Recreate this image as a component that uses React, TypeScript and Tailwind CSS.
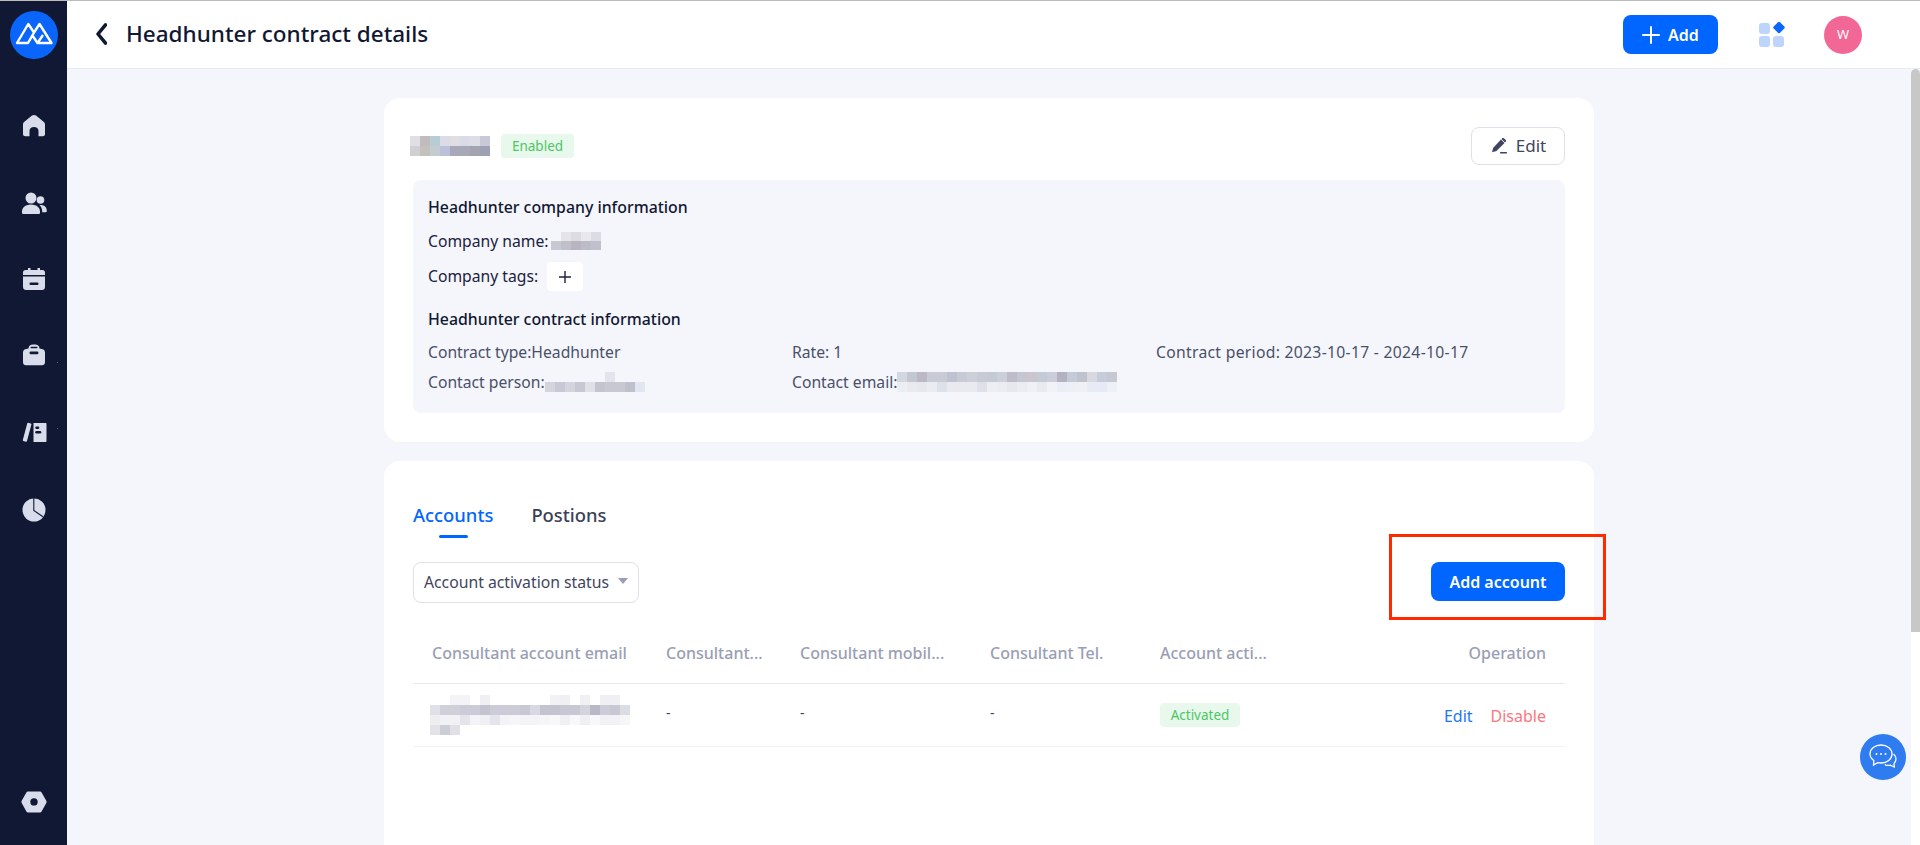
import React from "react";

const Mosaic = ({ rows, cell = 10, rowH = 10 }: { rows: string[][]; cell?: number; rowH?: number }) => {
  const cols = Math.max(...rows.map((r) => r.length));
  return (
    <svg width={cols * cell} height={rows.length * rowH} shapeRendering="crispEdges" className="block shrink-0">
      {rows.map((r, y) =>
        r.map((c, x) => <rect key={`${x}-${y}`} x={x * cell} y={y * rowH} width={cell} height={rowH} fill={c} />)
      )}
    </svg>
  );
};

const ICON = "#d9dcea";
const BG = "#111833";

const Home = () => (
  <svg width="24" height="24" viewBox="0 0 24 24">
    <path fill={ICON} d="M10 1.600c1.200-.9 2.800-.9 4 0l7.600 6.200c.9.700 1.400 1.700 1.400 2.800v9.400c0 1.300-1 2.300-2.300 2.300h-4.200v-5.300c0-2.500-1.800-4-4.500-4s-4.500 1.500-4.500 4v5.300H3.300C2 22.300 1 21.300 1 20v-9.400c0-1.100.5-2.100 1.400-2.800z" />
  </svg>
);
const People = () => (
  <svg width="26" height="24" viewBox="0 0 26 24">
    <circle cx="10" cy="7" r="5.500" fill={ICON} />
    <path fill={ICON} d="M1 22c-.6-5 3-8.500 9-8.500s9.500 3.500 9 8.500c-.1.800-.7 1-1.500 1h-15c-.8 0-1.400-.2-1.500-1z" />
    <circle cx="19.500" cy="9" r="3.800" fill={ICON} />
    <path fill={ICON} d="M18.500 14c4-.5 7.500 1.500 7.300 6 0 .8-.5 1.200-1.300 1.200h-3.300c.2-2.800-.8-5.200-2.700-7.200z" />
  </svg>
);
const Calendar = () => (
  <svg width="24" height="24" viewBox="0 0 24 24">
    <path fill={ICON} d="M6 1h2.500v2h7V1H18v2h2.500C22 3 23 4 23 5.500V8H1V5.500C1 4 2 3 3.500 3H6z" />
    <path fill={ICON} d="M1 9.500h22V20c0 1.700-1.300 3-3 3H4c-1.700 0-3-1.300-3-3z" />
    <rect x="7.500" y="15.500" width="9" height="2.500" rx="1" fill={BG} />
  </svg>
);
const Bag = () => (
  <svg width="24" height="24" viewBox="0 0 24 24">
    <path fill={ICON} d="M6.500 5.500C6.500 2.800 8.500 1.500 11 1.500h2c2.500 0 4.500 1.300 4.500 4 3.300.3 5.500 1.400 5.500 3.800v10c0 1.700-1.300 3-3 3H4c-1.700 0-3-1.300-3-3v-10c0-2.400 2.200-3.500 5.500-3.800z" />
    <rect x="8.500" y="3.800" width="7" height="1.500" rx=".7" fill={BG} />
    <rect x="7.500" y="8.500" width="9" height="2.800" rx="1.400" fill={BG} />
  </svg>
);
const Book = () => (
  <svg width="26" height="24" viewBox="0 0 26 24">
    <path fill={ICON} d="M6.200 3.500c.2-.6.600-.8 1.200-.7l2.300.6c.6.200.8.600.7 1.200L6 21c-.2.600-.6.800-1.200.7l-2.300-.6c-.6-.2-.8-.6-.7-1.200z" />
    <path fill={ICON} d="M12.500 3h12.300c.400 0 .700.300.700.700v17.600c0 .400-.3.700-.7.700H12.500z" />
    <rect x="14.300" y="6.500" width="4" height="2.500" rx="1.200" fill={BG} />
    <rect x="14.300" y="11" width="6" height="2.500" rx="1.200" fill={BG} />
  </svg>
);
const Pie = () => (
  <svg width="24" height="24" viewBox="0 0 24 24">
    <circle cx="12" cy="12" r="11.500" fill={ICON} />
    <path d="M11.800 0V12.500L21 18.800" fill="none" stroke={BG} strokeWidth="1.100" />
  </svg>
);
const Gear = () => (
  <svg width="26" height="24" viewBox="0 0 26 24">
    <path fill={ICON} fillRule="evenodd" d="M7 1.500h12c.7 0 1.200.3 1.600 1l4.700 8.200c.4.800.4 1.500 0 2.300l-4.700 8.500c-.4.700-.9 1-1.600 1H7c-.7 0-1.200-.3-1.600-1L.7 13c-.4-.8-.4-1.500 0-2.300l4.700-8.200c.4-.7.900-1 1.600-1zM13 8.200a3.700 3.700 0 1 0 0 7.400 3.700 3.700 0 0 0 0-7.400z" />
  </svg>
);

const Logo = () => (
  <svg width="48" height="48" viewBox="0 0 48 48" className="block">
    <circle cx="24" cy="24" r="24" fill="#0a66fb" />
    <path
      fill="none"
      stroke="#fff"
      strokeWidth="2.400"
      strokeLinejoin="round"
      d="M7 32 18.300 13 24 21.500 29.500 13 41.500 32H27.500L22.500 24.500 18 32zM24 21.500 18 32M27.500 32 33 24"
    />
  </svg>
);

const navItems = [
  { I: Home, h: "h-[77px]", dot: "" },
  { I: People, h: "h-[76px]", dot: "" },
  { I: Calendar, h: "h-[76px]", dot: "" },
  { I: Bag, h: "h-[77px]", dot: "top-[19px]" },
  { I: Book, h: "h-[78px]", dot: "top-[8px]" },
  { I: Pie, h: "h-[24px]", dot: "" },
];

const Sidebar = () => (
  <aside className="w-[67px] shrink-0 bg-[#111833] flex flex-col items-center">
    <div className="mt-[10px] h-[48px] w-[48px]">
      <Logo />
    </div>
    <nav className="mt-[55px] flex flex-col items-center w-full">
      {navItems.map(({ I, h, dot }, i) => (
        <div key={i} className={`${h} relative flex items-start justify-center w-full`}>
          <I />
          {dot && <span className={`absolute left-[57px] ${dot} h-px w-px bg-[#1f6fc4]`} />}
        </div>
      ))}
    </nav>
    <div className="mt-auto mb-[31px]">
      <Gear />
    </div>
  </aside>
);

const Header = () => (
  <header className="h-[68px] shrink-0 bg-white border-b border-[#e8eaf2] flex items-center pl-[28px] pr-[58px]">
    <svg width="12" height="24" viewBox="0 0 12 24" className="mr-[19px] -mt-px">
      <path d="M10.500 2.800 3 12 10.500 21.200" fill="none" stroke="#111833" strokeWidth="3.500" strokeLinecap="round" strokeLinejoin="round" />
    </svg>
    <h1 className="text-[22.500px] font-medium text-[#111833] leading-none">Headhunter contract details</h1>
    <button className="ml-auto h-[39px] w-[95px] rounded-lg bg-[#0066ff] text-white flex items-center justify-center gap-[8px] text-[16px] font-semibold">
      <svg width="18" height="18" viewBox="0 0 18 18">
        <path d="M9 1v16M1 9h16" stroke="#fff" strokeWidth="2" strokeLinecap="round" />
      </svg>
      Add
    </button>
    <svg width="27" height="27" viewBox="0 0 27 27" className="ml-[41px]">
      <rect x="0" y="2" width="11" height="11" rx="3" fill="#bdd4fd" />
      <rect x="0" y="15" width="11" height="11" rx="3" fill="#bdd4fd" />
      <rect x="14" y="15" width="11" height="11" rx="3" fill="#bdd4fd" />
      <rect x="15.500" y="2" width="9" height="9" rx="1.500" transform="rotate(45 20 6.500)" fill="#0a66fb" />
    </svg>
    <div className="ml-[38px] h-[38px] w-[38px] rounded-full bg-[#f36796] text-white text-[13px] flex items-center justify-center">W</div>
  </header>
);

const Watermark = () => (
  <div className="absolute inset-0 overflow-hidden pointer-events-none">
    <div className="ml-[39px] mt-[8px] grid grid-cols-[repeat(8,245px)] auto-rows-[120px] w-[1960px]">
      {Array.from({ length: 56 }).map((_, i) => (
        <div key={i} className="flex flex-col items-center justify-center -rotate-[31deg] text-[20px] leading-[24px] text-[#5f6b8a]/[0.02] whitespace-nowrap">
          <span>wangyue1@mokah 2023-11-1</span>
          <span className="text-[18px]">wangyue1</span>
        </div>
      ))}
    </div>
  </div>
);

const nameRows = [
  ["#e0e0e4", "#c0bcbc", "#b8ccd6", "#dcdce6", "#e0dee2", "#d8dce6", "#dcdee6", "#c8c8d8"],
  ["#d0d0d4", "#c4c0bc", "#c4ccd0", "#bcc0d8", "#a8a8b8", "#a8a8b8", "#a4a4b0", "#a0a0b4"],
];
const companyRows = [
  ["#f4f6fb", "#e4e4ea", "#dcdce4", "#e8e8ee", "#dcdce4"],
  ["#c8c8d2", "#c0c0ca", "#b8b4c0", "#bcbcc8", "#c0c0cc"],
];
const personRows = [
  ["#f4f6fb", "#f4f6fb", "#f4f6fb", "#f4f6fb", "#f4f6fb", "#f4f6fb", "#e4e4ec", "#f4f6fb", "#f4f6fb", "#f4f6fb"],
  ["#d4d4dc", "#c8c8d4", "#d4d4dc", "#c8c8d4", "#e0e0e8", "#c4c4d0", "#c8c8d2", "#c8c8d2", "#c0c0cc", "#e2e6f2"],
];
const emailRows = [
  ["#d4d6e0", "#c4c6d2", "#bcb8c4", "#c8cad6", "#c8cad6", "#bfc2d0", "#c8cad6", "#ccced8", "#c8cad6", "#c6cad4", "#ccced8", "#bebcc8", "#c6c6d2", "#cac6cc", "#c6cad6", "#cccdda", "#b2b2c2", "#c6cad6", "#c0c2ce", "#d8d8de", "#c8ccda", "#c6c8d2"],
  ["#eceef4", "#e8eaf0", "#e6e8ee", "#eaecf2", "#dde2ea", "#e8eaf0", "#e8eaf0", "#e8eaf0", "#dde2ea", "#eceef4", "#eaecf2", "#e6e8ee", "#eaecf2", "#eef0f6", "#e8eaf0", "#f0f2f8", "#ebeef6", "#eeeff6", "#eef0f6", "#e8eaf4", "#e6eaf6", "#eef0f8"],
];
const tableEmailRows = [
  ["#ffffff", "#ffffff", "#f4f4f8", "#f4f4f8", "#ffffff", "#f0f0f4", "#ffffff", "#ffffff", "#ffffff", "#ffffff", "#ffffff", "#ffffff", "#f2f2f6", "#f0f0f4", "#ffffff", "#f0f0f4", "#ffffff", "#f0f0f4", "#f0f0f4", "#ffffff"],
  ["#e0e0e8", "#d0d0da", "#d0d0da", "#ccccd8", "#ccccd8", "#c4c4d0", "#ccccd8", "#ccccd8", "#ccccd8", "#c8c8d4", "#d8d8e2", "#c4c4d0", "#c4c4d0", "#c8c8d4", "#c8c8d4", "#d4d4de", "#b8b8c6", "#ccccd8", "#c8c8d4", "#dcdce4"],
  ["#eeeef2", "#f2f2f6", "#f2f2f6", "#e4e4ea", "#f4f4f8", "#f0f0f4", "#e4e4ec", "#f4f4f8", "#f6f6f8", "#f4f4f8", "#f4f4f8", "#f6f6f8", "#f8f8fa", "#f0f0f4", "#f8f8fa", "#f0f0f4", "#f8f8fa", "#f2f2f6", "#f2f2f6", "#f6f6f8"],
  ["#e2e2e8", "#cccdd6", "#e0e0e6"],
];

const Card1 = () => (
  <section className="bg-white rounded-2xl px-[29px] pt-[29px] pb-[29px] mb-[19px]">
    <div className="flex items-center h-[38px] mb-[15px]">
      <div className="-ml-[3px] mr-[11px]">
        <Mosaic rows={nameRows} />
      </div>
      <span className="h-[24px] w-[73px] rounded bg-[#e8f8ec] text-[#4cc764] text-[13.500px] flex items-center justify-center">Enabled</span>
      <button className="ml-auto h-[38px] w-[94px] rounded-lg border border-[#dfe0ea] text-[#3f4460] text-[17px] flex items-center justify-center gap-[8px] bg-white">
        <svg width="18" height="18" viewBox="0 0 18 18">
          <path fill="#3f4460" d="M11 2.500 14.500 6l-7.800 7.800c-.3.300-.6.500-1 .5l-3.700 1 1-3.700c.1-.4.300-.7.500-1zM12.200 1.300c.5-.5 1.200-.5 1.700 0l1.800 1.800c.5.500.5 1.200 0 1.700l-.7.700L11.500 2z" />
          <rect x="10" y="15" width="7" height="1.600" rx=".5" fill="#3f4460" />
        </svg>
        Edit
      </button>
    </div>
    <div className="bg-[#f4f6fb] rounded-lg pl-[15px] pr-[15px] pt-[15px] pb-[19px] text-[15.700px] text-[#1c2140]">
      <h3 className="h-[24px] leading-[24px] text-[15.850px] font-medium text-[#111833]">Headhunter company information</h3>
      <div className="mt-[10px] h-[24px] leading-[24px] flex items-center">
        <span>Company name:</span>
        <div className="ml-[2px]">
          <Mosaic rows={companyRows} cell={10} rowH={9} />
        </div>
      </div>
      <div className="mt-[9px] h-[29px] flex items-center">
        <span>Company tags:</span>
        <span className="ml-[9px] h-[29px] w-[36px] rounded bg-white flex items-center justify-center">
          <svg width="14" height="14" viewBox="0 0 14 14">
            <path d="M7 1v12M1 7h12" stroke="#1c2140" strokeWidth="1.400" />
          </svg>
        </span>
      </div>
      <h3 className="mt-[16px] h-[24px] leading-[24px] text-[15.850px] font-medium text-[#111833]">Headhunter contract information</h3>
      <div className="grid grid-cols-[364px_364px_1fr] text-[#4b5069] leading-[24px]">
        <div className="mt-[9px]">Contract type:Headhunter</div>
        <div className="mt-[9px]">Rate: 1</div>
        <div className="mt-[9px] tracking-[0.3px]">Contract period: 2023-10-17 - 2024-10-17</div>
        <div className="mt-[6px] flex items-center">
          <span>Contact person:</span>
          <Mosaic rows={personRows} />
        </div>
        <div className="mt-[6px] flex items-center">
          <span>Contact email:</span>
          <Mosaic rows={emailRows} />
        </div>
      </div>
    </div>
  </section>
);

const cols = "grid grid-cols-[234px_134px_190px_170px_1fr]";

const Card2 = () => (
  <section className="relative bg-white rounded-t-2xl px-[29px] pt-[42px] h-[500px]">
    <div className="flex gap-[38px] text-[18.400px] font-medium">
      <div className="flex flex-col items-center">
        <span className="leading-[24px] text-[#0066ff]">Accounts</span>
        <span className="mt-[8px] h-[3px] w-[29px] rounded bg-[#0066ff]" />
      </div>
      <span className="leading-[24px] text-[#3b3f57]">Postions</span>
    </div>
    <div className="mt-[24px] flex justify-between items-start">
      <div className="h-[41px] w-[226px] rounded-lg border border-[#dfe0ea] flex items-center pl-[10px] text-[15.750px] text-[#3f4460] whitespace-nowrap">
        Account activation status
        <svg width="10" height="6" viewBox="0 0 10 6" className="ml-auto mr-[10px] -mt-[4px]">
          <path d="M0 0h10L5 6z" fill="#9a9eb4" />
        </svg>
      </div>
      <button className="h-[39px] w-[134px] rounded-lg bg-[#0066ff] text-white text-[16px] font-semibold">Add account</button>
    </div>
    <div className={`${cols} mt-[20px] h-[61px] items-center border-b border-[#e8e9f2] text-[16px] font-medium text-[#9a9eb4]`}>
      <div className="pl-[19px] whitespace-nowrap">Consultant account email</div>
      <div className="pl-[19px]">Consultant...</div>
      <div className="pl-[19px] whitespace-nowrap">Consultant mobil...</div>
      <div className="pl-[19px]">Consultant Tel.</div>
      <div className="flex justify-between pl-[19px] pr-[19px]">
        <span>Account acti...</span>
        <span>Operation</span>
      </div>
    </div>
    <div className={`${cols} h-[63px] items-center border-b border-[#f1f1f6] text-[14px] text-[#3f4460]`}>
      <div className="pl-[17px]">
        <Mosaic rows={tableEmailRows} />
      </div>
      <div className="pl-[19px] -mt-[6px]">-</div>
      <div className="pl-[19px] -mt-[6px]">-</div>
      <div className="pl-[19px] -mt-[6px]">-</div>
      <div className="flex items-center justify-between pl-[19px] pr-[19px]">
        <span className="h-[24px] w-[80px] rounded bg-[#e8f8ec] text-[#4cc764] text-[13.500px] flex items-center justify-center">Activated</span>
        <span className="flex gap-[18px] text-[16px] mt-[2px]">
          <span className="text-[#2176f6]">Edit</span>
          <span className="text-[#fb7680]">Disable</span>
        </span>
      </div>
    </div>
    <div className="absolute left-[1005px] top-[73px] w-[217px] h-[86px] border-[3px] border-[#ff2a00]" />
  </section>
);

const ChatFab = () => (
  <div className="absolute right-[5px] top-[665px] h-[46px] w-[46px] rounded-full bg-[#2e7cf0] flex items-center justify-center">
    <svg width="32" height="32" viewBox="0 0 32 32" fill="none" stroke="#fff" strokeWidth="1.300">
      <path d="M14 4c6 0 11 3.800 11 9s-5 9-11 9c-1.200 0-2.300-.1-3.300-.4L6.500 24l.3-4.500C4.500 17.800 3 15.500 3 13c0-5.200 5-9 11-9z" />
      <path d="M26.500 13c1.800 1.500 2.500 3.200 2.500 5 0 1.800-.8 3.200-2 4.400l.3 3.600-4-1.800c-1.300.3-4 .3-5.500-.8" />
      <circle cx="9.500" cy="13" r="1" fill="#fff" stroke="none" />
      <circle cx="14" cy="13" r="1" fill="#fff" stroke="none" />
      <circle cx="18.500" cy="13" r="1" fill="#fff" stroke="none" />
    </svg>
  </div>
);

export default function App() {
  return (
    <div className="h-[845px] w-[1920px] overflow-hidden flex flex-col bg-white font-['Noto_Sans',sans-serif]">
      <div className="h-px bg-[#bcbcbc] shrink-0" />
      <div className="flex flex-1 min-h-0">
        <Sidebar />
        <div className="flex-1 flex flex-col min-w-0">
          <Header />
          <div className="flex flex-1 min-h-0">
            <main className="relative flex-1 bg-[#f4f6fb] overflow-hidden pt-[29px]">
              <div className="w-[1210px] mx-auto">
                <Card1 />
                <Card2 />
              </div>
              <Watermark />
              <ChatFab />
            </main>
            <div className="w-[9px] shrink-0 bg-white">
              <div className="h-[563px] w-[9px] rounded-t-md bg-[#c8c8c8]" />
            </div>
          </div>
        </div>
      </div>
    </div>
  );
}
